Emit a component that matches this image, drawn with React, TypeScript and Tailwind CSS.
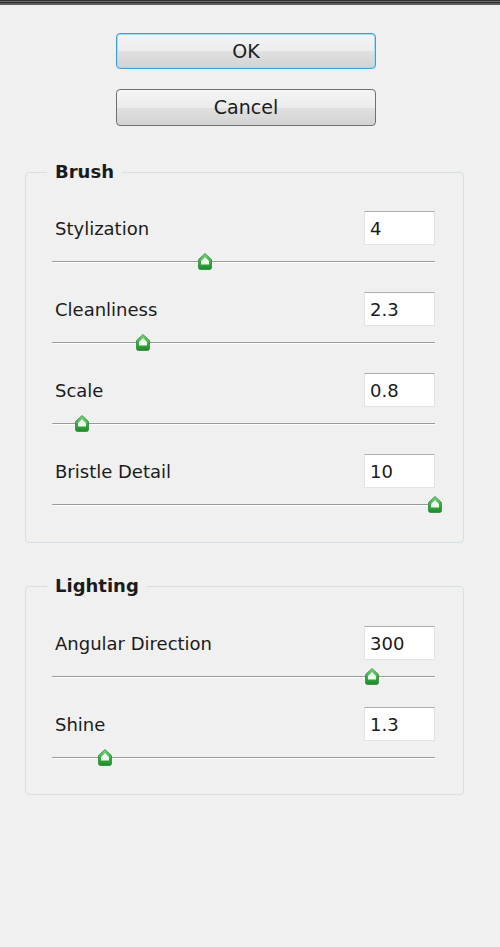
import React from 'react';

type Setting = { label: string; value: string; pct: number };

const brush: Setting[] = [
  { label: 'Stylization', value: '4', pct: 40 },
  { label: 'Cleanliness', value: '2.3', pct: 23.8 },
  { label: 'Scale', value: '0.8', pct: 7.8 },
  { label: 'Bristle Detail', value: '10', pct: 100 },
];

const lighting: Setting[] = [
  { label: 'Angular Direction', value: '300', pct: 83.6 },
  { label: 'Shine', value: '1.3', pct: 13.8 },
];

function Thumb() {
  return (
    <svg width="14" height="17" viewBox="0 0 14 17">
      <defs>
        <linearGradient id="thumbFill" x1="0" y1="0" x2="0" y2="1">
          <stop offset="0" stopColor="#7fd37f" />
          <stop offset="0.5" stopColor="#3caf47" />
          <stop offset="1" stopColor="#1b8a2a" />
        </linearGradient>
      </defs>
      <path d="M7 0.5 L13.5 6.5 L13.5 14.5 Q13.5 16.5 11.5 16.5 L2.5 16.5 Q0.5 16.5 0.5 14.5 L0.5 6.5 Z" fill="url(#thumbFill)" stroke="#2c8a36" strokeWidth="0.8" />
      <path d="M7 4 L11 8 L11 11.5 L3 11.5 L3 8 Z" fill="#eef8ee" />
    </svg>
  );
}

function Slider({ pct }: { pct: number }) {
  return (
    <div className="relative h-[33px] ml-[26px] mr-[28px]">
      <div className="absolute left-0 right-0 top-[16px] h-[2px] bg-[#9a9a9a] border-b border-white rounded-l-full" />
      <div className="absolute top-[8px] -translate-x-1/2" style={{ left: `${pct}%` }}>
        <Thumb />
      </div>
    </div>
  );
}

function Row({ s }: { s: Setting }) {
  return (
    <div className="flex flex-col h-[67px]">
      <div className="flex items-center justify-between h-[34px] pl-[29px] pr-[28px]">
        <span className="text-[18px]">{s.label}</span>
        <input
          readOnly
          defaultValue={s.value}
          className="w-[71px] h-[34px] bg-white border border-[#e2e3e5] border-t-[#abadb3] px-[5px] text-[18px] text-[#1b1b1b] outline-none"
        />
      </div>
      <Slider pct={s.pct} />
    </div>
  );
}

function Group({ title, items, className }: { title: string; items: Setting[]; className: string }) {
  return (
    <fieldset className={`w-[439px] border border-[#d5dfe5] rounded-[4px] ${className}`}>
      <legend className="ml-[21px] px-[8px] text-[18px] leading-[24px] font-bold">{title}</legend>
      <div className="flex flex-col gap-[14px]">
        {items.map((s) => (
          <Row key={s.label} s={s} />
        ))}
      </div>
    </fieldset>
  );
}

export default function App() {
  return (
    <div className="w-[500px] h-[947px] bg-[#f0f0f0] text-[#1b1b1b] font-['DejaVu_Sans',sans-serif] overflow-hidden">
      {/* window frame edge */}
      <div className="h-[5px] bg-[linear-gradient(to_bottom,#111_0%,#6e6e6e_30%,#1a1a1a_55%,#8a8a8a_80%,#333_100%)]" />

      <div className="pl-[116px] pt-[28px] flex flex-col gap-[20px]">
        <button className="w-[260px] h-[36px] rounded-[4px] border border-[#3c9fd9] shadow-[inset_0_0_0_1px_#a6dbf6] bg-[linear-gradient(to_bottom,#f5f5f5_0%,#ececec_50%,#e0e0e0_51%,#d3d3d3_100%)] text-[19px] text-[#1b1b1b]">
          OK
        </button>
        <button className="w-[260px] h-[37px] rounded-[4px] border border-[#707070] bg-[linear-gradient(to_bottom,#f5f5f5_0%,#ececec_50%,#e0e0e0_51%,#d3d3d3_100%)] text-[19px] text-[#1b1b1b]">
          Cancel
        </button>
      </div>

      <div className="pl-[25px]">
        <Group title="Brush" items={brush} className="mt-[34px] pt-[27px] pb-[21px]" />
        <Group title="Lighting" items={lighting} className="mt-[31px] pt-[28px] pb-[20px]" />
      </div>
    </div>
  );
}
